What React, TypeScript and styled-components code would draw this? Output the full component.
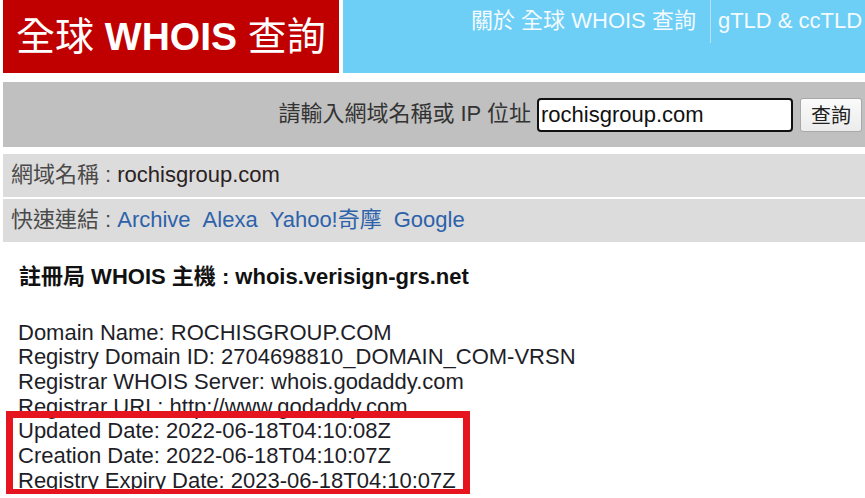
import React from "react";
import styled, { createGlobalStyle } from "styled-components";

const GlobalStyle = createGlobalStyle`
  html, body {
    margin: 0;
    padding: 0;
    background: #ffffff;
  }
  body {
    font-family: "Liberation Sans", Arial, "Noto Sans CJK TC", sans-serif;
    overflow: hidden;
  }
`;

const FONT = `"Liberation Sans", Arial, "Noto Sans CJK TC", sans-serif`;

const Page = styled.div`
  width: 100%;
  box-sizing: border-box;
  padding-left: 3px;
  font-family: ${FONT};
  font-size: 22px;
  line-height: 24.7px;
  color: #222;
`;

const Header = styled.header`
  display: flex;
  gap: 4px;
  height: 73px;
`;

const Logo = styled.div`
  flex: 0 0 336px;
  background: #c00000;
  color: #ffffff;
  display: flex;
  align-items: center;
  padding-left: 13px;
  box-sizing: border-box;
  font-size: 39px;
  font-weight: 700;
  line-height: 40px;
  white-space: nowrap;
`;

const Han = styled.span`
  font-weight: 400;
`;

const Nav = styled.nav`
  flex: 1;
  min-width: 0;
  background: #6dcef6;
  display: flex;
  align-items: flex-start;
  padding-left: 120px;
  overflow: hidden;
  white-space: nowrap;
`;

const NavItem = styled.a<{ $divider?: boolean }>`
  display: block;
  height: 43px;
  line-height: 42px;
  font-size: 22px;
  color: #f4fbff;
  text-decoration: none;
  padding: ${(p) => (p.$divider ? "0 0 0 7px" : "0 14px 0 8px")};
  border-left: ${(p) => (p.$divider ? "1.5px solid #b4e3f7" : "none")};
`;

const SearchBar = styled.form`
  margin-top: 9px;
  height: 65px;
  background: #c0c0c0;
  display: flex;
  align-items: center;
  justify-content: flex-end;
  padding-right: 3px;
`;

const SearchLabel = styled.label`
  color: #333;
  font-size: 22px;
  margin-right: 6px;
  white-space: nowrap;
`;

const SearchInput = styled.input`
  width: 256px;
  height: 34px;
  box-sizing: border-box;
  border: 2px solid #111;
  border-radius: 4px;
  padding: 0 2px;
  font-family: ${FONT};
  font-size: 22px;
  color: #111;
  background: #fff;
  outline: none;
`;

const SearchButton = styled.button`
  margin-left: 7px;
  width: 62px;
  height: 34px;
  box-sizing: border-box;
  border: 1px solid #a8a8a8;
  border-radius: 3px;
  background: linear-gradient(#fafafa, #ececec);
  font-family: ${FONT};
  font-size: 20px;
  color: #222;
  padding: 0;
`;

const InfoRow = styled.div<{ $gap: number }>`
  margin-top: ${(p) => p.$gap}px;
  height: 43px;
  background: #dcdcdc;
  display: flex;
  align-items: center;
  padding-left: 8px;
  white-space: nowrap;
`;

const RowLabel = styled.span`
  color: #4a4a4a;
  margin-right: 6px;
`;

const RowValue = styled.span`
  color: #2a2222;
`;

const LinkItem = styled.a`
  color: #2d62aa;
  text-decoration: none;
  margin-right: 12px;
`;

const ServerHeading = styled.h3`
  margin: 23px 0 0 16px;
  font-size: 22px;
  line-height: 24.7px;
  font-weight: 700;
  color: #111;
  white-space: nowrap;
`;

const WhoisBlock = styled.div`
  margin: 31px 0 0 15px;
  color: #1e1e28;
  white-space: nowrap;
`;

const Line = styled.div`
  height: 24.7px;
`;

const Highlight = styled.div`
  position: relative;
`;

const HighlightFrame = styled.div`
  position: absolute;
  top: -8px;
  left: -12px;
  width: 464px;
  height: 85px;
  box-sizing: border-box;
  border: 7px solid #e6141e;
  pointer-events: none;
`;

const topLines = [
  "Domain Name: ROCHISGROUP.COM",
  "Registry Domain ID: 2704698810_DOMAIN_COM-VRSN",
  "Registrar WHOIS Server: whois.godaddy.com",
  "Registrar URL: http://www.godaddy.com",
];

const dateLines = [
  "Updated Date: 2022-06-18T04:10:08Z",
  "Creation Date: 2022-06-18T04:10:07Z",
  "Registry Expiry Date: 2023-06-18T04:10:07Z",
];

const links = ["Archive", "Alexa", "Yahoo!奇摩", "Google"];

export default function App() {
  return (
    <>
      <GlobalStyle />
      <Page>
        <Header>
          <Logo>
            <Han>全球</Han>&nbsp;WHOIS&nbsp;<Han>查詢</Han>
          </Logo>
          <Nav>
            <NavItem href="#">關於 全球 WHOIS 查詢</NavItem>
            <NavItem href="#" $divider>
              gTLD &amp; ccTLD
            </NavItem>
          </Nav>
        </Header>

        <SearchBar onSubmit={(e) => e.preventDefault()}>
          <SearchLabel htmlFor="q">請輸入網域名稱或 IP 位址</SearchLabel>
          <SearchInput id="q" defaultValue="rochisgroup.com" />
          <SearchButton type="submit">查詢</SearchButton>
        </SearchBar>

        <InfoRow $gap={7}>
          <RowLabel>網域名稱 :</RowLabel>
          <RowValue>rochisgroup.com</RowValue>
        </InfoRow>
        <InfoRow $gap={2}>
          <RowLabel>快速連結 :</RowLabel>
          {links.map((l) => (
            <LinkItem key={l} href="#">
              {l}
            </LinkItem>
          ))}
        </InfoRow>

        <ServerHeading>註冊局 WHOIS 主機 : whois.verisign-grs.net</ServerHeading>

        <WhoisBlock>
          {topLines.map((l) => (
            <Line key={l}>{l}</Line>
          ))}
          <Highlight>
            {dateLines.map((l) => (
              <Line key={l}>{l}</Line>
            ))}
            <HighlightFrame />
          </Highlight>
        </WhoisBlock>
      </Page>
    </>
  );
}
